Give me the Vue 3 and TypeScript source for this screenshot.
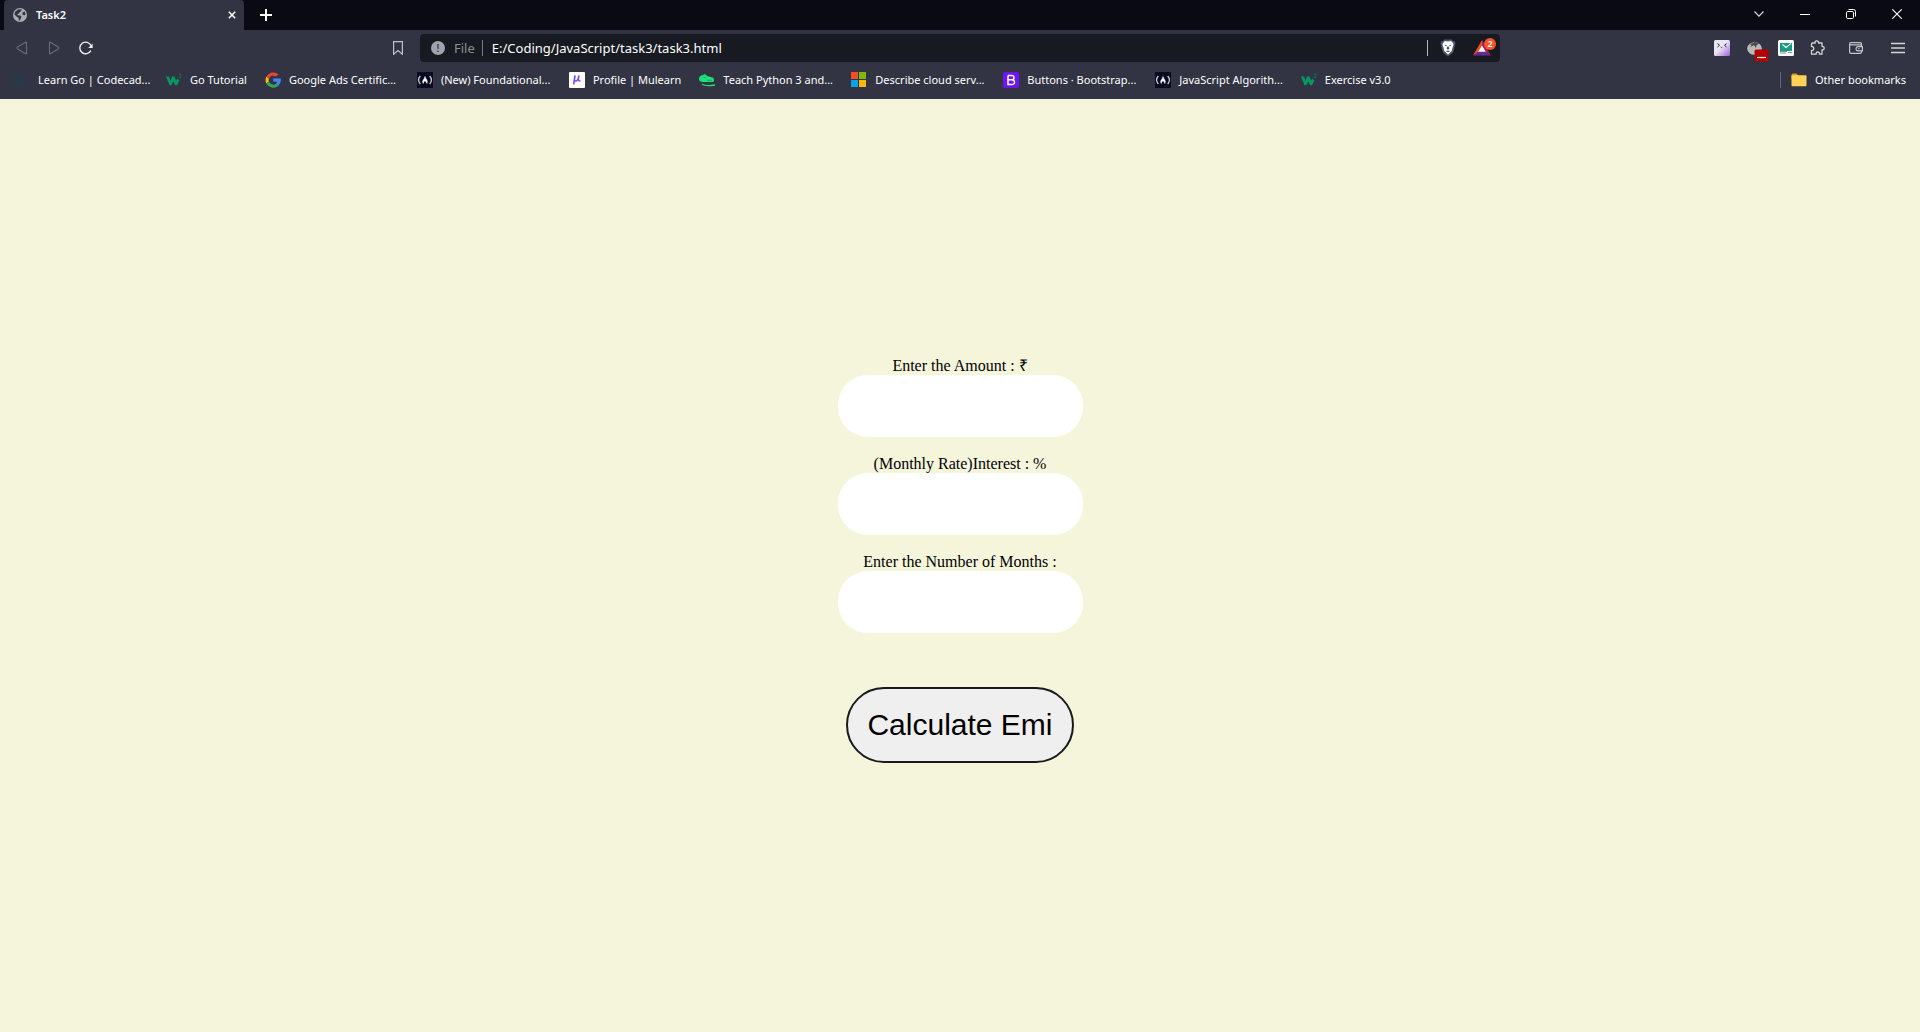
<script setup lang="ts">
import { ref } from 'vue'

type IconName = 'codecademy' | 'w3' | 'google' | 'fcc' | 'mulearn' | 'python' | 'microsoft' | 'bootstrap'

interface Bookmark {
  icon: IconName
  label: string
  clipped: boolean
}

const bookmarks: Bookmark[] = [
  { icon: 'codecademy', label: 'Learn Go | Codecad...', clipped: true },
  { icon: 'w3', label: 'Go Tutorial', clipped: false },
  { icon: 'google', label: 'Google Ads Certific...', clipped: true },
  { icon: 'fcc', label: '(New) Foundational...', clipped: true },
  { icon: 'mulearn', label: 'Profile | Mulearn', clipped: false },
  { icon: 'python', label: 'Teach Python 3 and...', clipped: true },
  { icon: 'microsoft', label: 'Describe cloud serv...', clipped: true },
  { icon: 'bootstrap', label: 'Buttons · Bootstrap...', clipped: true },
  { icon: 'fcc', label: 'JavaScript Algorith...', clipped: false },
  { icon: 'w3', label: 'Exercise v3.0', clipped: false },
]

const fields = [
  { id: 'amount', label: 'Enter the Amount : ₹' },
  { id: 'rate', label: '(Monthly Rate)Interest : %' },
  { id: 'months', label: 'Enter the Number of Months :' },
]

const values = ref<string[]>(['', '', ''])
const address = ref('E:/Coding/JavaScript/task3/task3.html')
</script>

<template>
  <div class="browser">
    <header class="chrome">
      <div class="tabstrip">
        <div class="tab">
          <svg class="icon" width="14" height="14" viewBox="0 0 14 14">
            <circle cx="7" cy="7" r="7" fill="#a9acb3" />
            <path d="M5 1.6 8.6 1.2 8.2 3.2 6.6 4 6.2 5.6 4.4 6 4.8 7.2 7.4 7.4 8.6 8.8 7.8 10.6 6.8 12.6 5.8 12.4 5.6 10 3.8 8.8 1.4 6.4 2.2 3.8Z M9.6 4.4 11.6 3.6 12.6 6.2 11.4 7.4 9.4 6.4Z" fill="#323443" />
          </svg>
          <span class="tab-title">Task2</span>
          <button class="plain tab-close" aria-label="Close tab">
            <svg width="8" height="8" viewBox="0 0 8 8"><path d="M.8.8 7.2 7.2M7.2.8.8 7.2" stroke="#fff" stroke-width="1.6" /></svg>
          </button>
        </div>
        <button class="plain new-tab" aria-label="New tab">
          <svg width="12" height="12" viewBox="0 0 12 12"><path d="M6 0V12M0 6H12" stroke="#fff" stroke-width="2" /></svg>
        </button>
        <div class="window-controls">
          <button class="plain" aria-label="Search tabs">
            <svg width="10" height="6" viewBox="0 0 10 6"><path d="M.5.5 5 5.2 9.500.5" fill="none" stroke="#dcdce0" stroke-width="1.1" /></svg>
          </button>
          <button class="plain" aria-label="Minimize">
            <svg width="10" height="10" viewBox="0 0 10 10"><path d="M0 5.500H10" stroke="#fff" /></svg>
          </button>
          <button class="plain" aria-label="Restore">
            <svg width="10" height="10" viewBox="0 0 10 10" fill="none" stroke="#fff"><rect x=".5" y="2.500" width="7" height="7" rx="1.200" /><path d="M2.500.5H7.500Q9.500.5 9.500 2.500V7.500" /></svg>
          </button>
          <button class="plain" aria-label="Close">
            <svg width="10" height="10" viewBox="0 0 10 10"><path d="M.3.3 9.700 9.700M9.700.3.3 9.700" stroke="#fff" stroke-width="1.100" /></svg>
          </button>
        </div>
      </div>

      <div class="toolbar">
        <div class="toolbar-left">
          <button class="plain nav" aria-label="Back">
            <svg width="12" height="14" viewBox="0 0 12 14"><path d="M10.500 1.600V12.400Q10.500 13.300 9.700 12.800L1.300 7.700Q.5 7 1.300 6.300L9.700 1.200Q10.500.7 10.500 1.600Z" fill="none" stroke="#686a77" stroke-width="1.100" /></svg>
          </button>
          <button class="plain nav" aria-label="Forward">
            <svg width="12" height="14" viewBox="0 0 12 14"><path d="M1.500 1.600V12.400Q1.500 13.300 2.300 12.800L10.700 7.700Q11.500 7 10.700 6.300L2.300 1.200Q1.500.7 1.500 1.600Z" fill="none" stroke="#686a77" stroke-width="1.100" /></svg>
          </button>
          <button class="plain nav" aria-label="Reload">
            <svg width="14" height="14" viewBox="0 0 14 14"><path d="M11.800 9.600A5.800 5.800 0 1 1 12 4.800" fill="none" stroke="#eeeef0" stroke-width="1.400" /><path d="M13.700 2.600V6.900H9.200Z" fill="#eeeef0" /></svg>
          </button>
          <button class="plain nav save" aria-label="Bookmark this page">
            <svg width="10" height="14" viewBox="0 0 10 14"><path d="M.6.6H9.400V13.200L5 9.600.6 13.200Z" fill="none" stroke="#c0c1c6" stroke-width="1.200" /></svg>
          </button>
        </div>

        <div class="address">
          <svg class="icon" width="14" height="14" viewBox="0 0 14 14"><circle cx="7" cy="7" r="7" fill="#a0a3ab" /><path d="M7 3V8M7 9.400V11" stroke="#53565e" stroke-width="1.800" /></svg>
          <span class="scheme">File</span>
          <input v-model="address" class="url" type="text" aria-label="Address" />
          <span class="rule"></span>
          <button class="plain shield" aria-label="Shields">
            <svg width="16" height="18" viewBox="0 0 16 18">
              <path d="M4.500.5H11.500L13.200 2.200 14.700 2 15.500 4.500 15 6 13.400 12.500 12.200 14.300 8 17.500 3.800 14.300 2.600 12.500 1 6 .5 4.500 1.300 2 2.800 2.200Z" fill="#55586a" />
              <path d="M5 2 8 2.600 11 2 12.600 3.500 13.600 5.200 12.300 9.500 11.700 12 8 15.500 4.300 12 3.700 9.500 2.400 5.200 3.400 3.500Z" fill="#fff" />
              <path d="M4.300 5.800 7 6.500 6 7.500ZM11.700 5.800 9 6.500 10 7.500ZM7.300 7.500H8.700L9.300 9.700 8 10.800 6.700 9.700ZM5.800 12 8 11.500 10.200 12 8 13.200Z" fill="#50535e" />
            </svg>
          </button>
          <button class="plain rewards" aria-label="Brave Rewards, 2 new">
            <svg width="20" height="16" viewBox="0 0 20 16"><path d="M10 0 15 8.500 10 6.500 6.600 12 1 15.500Z" fill="#ff4724" /><path d="M1 15.500 6.500 11.500H13.500L19 15.500Z" fill="#662d91" /><path d="M10 0 19 15.500 13.500 11.700 10 6Z" fill="#9e1f63" /><path d="M10 5.500 13.800 11.800H6.200Z" fill="#fff" /></svg>
            <span class="badge">2</span>
          </button>
        </div>

        <div class="toolbar-right">
          <button class="plain ext" aria-label="Face extension">
            <svg width="16" height="16" viewBox="0 0 16 16"><defs><linearGradient id="face" x1="0" y1="0" x2="1" y2="1"><stop offset=".45" stop-color="#e9e7f3" /><stop offset="1" stop-color="#a05bdc" /></linearGradient></defs><rect width="16" height="16" rx="1.500" fill="url(#face)" /><path d="M3.500 3.500 5.500 5.300 3.500 7M12.500 3.500 10.500 5.300 12.500 7M6.700 7 7.500 7.600 8.200 7" fill="none" stroke="#28243c" stroke-width="1" /></svg>
          </button>
          <button class="plain ext" aria-label="Tomato timer">
            <svg class="tomato" width="22" height="22" viewBox="0 0 22 22"><ellipse cx="7.500" cy="8.500" rx="7.300" ry="6.300" fill="#b9b9b7" /><path d="M2 4 7 3 6.500.5 8 .5 8.500 3 13 3.500 9.500 5 9 8 7 5 3.500 7 4.500 4.800Z" fill="#454840" /><rect x="7.500" y="9.500" width="14" height="12" rx="1.500" fill="#b70000" /><path d="M10 17.500H19" stroke="#fff" stroke-width="1.200" /></svg>
          </button>
          <button class="plain ext" aria-label="Mail extension">
            <svg width="16" height="16" viewBox="0 0 16 16"><rect width="16" height="16" rx="1.500" fill="#fff" /><rect x="2" y="3" width="12" height="8" fill="#149c84" /><path d="M4.500 4.500 8 7.500 13 3.500" fill="none" stroke="#fff" stroke-width="1.100" /><path d="M2 11.500H9M2 13H8M10 12.500H14" stroke="#59766f" stroke-width=".8" /></svg>
          </button>
          <button class="plain ext" aria-label="Extensions">
            <svg width="16" height="16" viewBox="0 0 16 16"><path d="M2.500 3H5.200C4.700 1.800 5.500.8 6.700.8S9 1.800 8.500 3H12V6.500C13.300 6.200 14.200 7 14.200 8.200S13.300 10.200 12 9.900V14.200H9.500C9.800 12.900 9 12 7.800 12S5.900 12.900 6.200 14.200H1.500V10.600C3 10.700 3.800 9.700 3.800 8.500S3 6.300 1.500 6.500V4Q1.500 3 2.500 3Z" fill="none" stroke="#d5d5d9" stroke-width="1.300" stroke-linejoin="round" /></svg>
          </button>
          <button class="plain wallet" aria-label="Wallet">
            <svg width="14" height="12" viewBox="0 0 14 12" fill="none" stroke="#c4c5ca" stroke-width="1.200"><path d="M12.500 4V2Q12.500.6 11 .6H2Q.6.6.6 2V10Q.6 11.400 2 11.400H11Q12.500 11.400 12.500 10V9M.6 2.800H12.500" /><path d="M13.400 4.600H9Q7 4.800 7 6.700T9 8.900H13.400Z" /><path d="M9.200 6.700H10.500" /></svg>
          </button>
          <button class="plain menu" aria-label="Menu">
            <svg width="14" height="12" viewBox="0 0 14 12"><path d="M0 1.500H14M0 6H14M0 10.500H14" stroke="#d6d6da" stroke-width="1.300" /></svg>
          </button>
        </div>
      </div>

      <nav class="bookmarks" aria-label="Bookmarks">
        <a v-for="mark in bookmarks" :key="mark.label" href="#" class="bookmark" :class="{ clipped: mark.clipped }">
          <svg class="icon" width="16" height="16" viewBox="0 0 16 16">
            <template v-if="mark.icon === 'codecademy'">
              <path d="M.7 1.700H9.500V14H.7ZM7 5.500Q3.500 4.500 3.500 7.800T7 10.300M11.500 14.300H15.500" fill="none" stroke="#233b53" stroke-width="1.300" />
            </template>
            <template v-else-if="mark.icon === 'w3'">
              <path d="M0 4.500H3L4.500 8.700 6 4.500H8.500L10 8.500 11.500 6.500 13.300 8.500 11 13.200H9.200L7.300 9.500 5.300 13.200H3.500Z" fill="#059862" />
              <path d="M12.500 2H15L13.800 3.500Q15.300 3.700 15 5T12.600 5.500" fill="none" stroke="#05774f" />
            </template>
            <template v-else-if="mark.icon === 'google'">
              <path d="M1.300 4.700A7.900 7.900 0 0 1 13.400 2.300L11.100 4.600A4.700 4.700 0 0 0 3.900 6.700Z" fill="#ea4335" />
              <path d="M1.300 4.700A8 8 0 0 0 1.300 11.500L3.900 9.500A4.700 4.700 0 0 1 3.900 6.700Z" fill="#fbbc05" />
              <path d="M1.300 11.500A7.900 7.900 0 0 0 13.300 14L10.700 12A4.700 4.700 0 0 1 3.900 9.500Z" fill="#34a853" />
              <path d="M8.200 6.600H15.700A8 8 0 0 1 13.300 14L10.700 12A3.500 3.500 0 0 0 12.200 9.700H8.200Z" fill="#4285f4" />
            </template>
            <template v-else-if="mark.icon === 'fcc'">
              <rect width="16" height="16" fill="#0a0a23" />
              <path d="M3.300 4Q-.2 8 3.300 12M12.700 4Q16.200 8 12.700 12" fill="none" stroke="#d0d0d8" stroke-width="1.200" />
              <path d="M8 4.500Q7.500 6.500 6.200 8T6.200 11.500Q6.500 9.500 8 8.800 9.500 9.500 9.800 11.500 11 9.700 9.800 8T8 4.500Z" fill="#fff" stroke="#fff" stroke-width=".5" />
            </template>
            <template v-else-if="mark.icon === 'mulearn'">
              <defs><linearGradient id="mu" x1="0" y1="0" x2="1" y2="1"><stop offset="0" stop-color="#3f55f5" /><stop offset="1" stop-color="#c04be8" /></linearGradient></defs>
              <rect width="16" height="16" rx="1" fill="#fff" />
              <path d="M6 3.500 4.700 12.500M5.600 8.500Q8.800 10.500 10 3.500M9.500 6.500Q9 9.500 11.500 8.700" fill="none" stroke="url(#mu)" stroke-width="1.700" />
            </template>
            <template v-else-if="mark.icon === 'python'">
              <path d="M0 7Q.2 3 4 3.200 5 1.500 7 2.700L8 4 13.500 5.500Q15.300 6.200 15 9L14 10H4Q0 10 0 7Z" fill="#1edf78" />
              <path d="M3 12.300Q7 14.600 16 13" fill="none" stroke="#1edf78" stroke-width="1.300" />
              <path d="M4.500 5.500H7M8 8.300H13" stroke="#159755" stroke-width=".8" />
            </template>
            <template v-else-if="mark.icon === 'microsoft'">
              <path d="M0 0H7V7H0Z" fill="#f25022" /><path d="M8 0H15V7H8Z" fill="#7fba00" /><path d="M0 8H7V15H0Z" fill="#00a4ef" /><path d="M8 8H15V15H8Z" fill="#ffb900" />
            </template>
            <template v-else>
              <rect width="16" height="16" rx="2" fill="#6f14f5" />
              <path d="M5 3.500H8.500Q11 3.500 11 5.700T8.500 7.800H5M8.500 7.800Q11.500 7.800 11.500 10.200T8.500 12.500H5V3.500" fill="none" stroke="#fff" stroke-width="1.500" />
            </template>
          </svg>
          <span>{{ mark.label }}</span>
        </a>
        <a href="#" class="bookmark other">
          <svg class="icon" width="16" height="14" viewBox="0 0 16 14"><path d="M.5 2Q.5.5 2 .5H5.500L7.500 3V6H.5Z" fill="#d79a14" /><rect x=".5" y="2.300" width="15" height="11" rx="1" fill="#ffd257" /></svg>
          <span>Other bookmarks</span>
        </a>
      </nav>
    </header>

    <main class="page">
      <form class="emi" @submit.prevent>
        <div v-for="(field, i) in fields" :key="field.id" class="field">
          <label :for="field.id">{{ field.label }}</label>
          <input :id="field.id" v-model="values[i]" type="text" />
        </div>
        <button class="calculate" type="submit">Calculate Emi</button>
      </form>
    </main>
  </div>
</template>

<style>
body {
  margin: 0;
}
</style>

<style scoped>
.browser {
  display: flex;
  flex-direction: column;
  min-height: 100vh;
  background: #f5f5dc;
}

.chrome {
  background: #323443;
  color: #fff;
  font: 12px/16px "Noto Sans", "Open Sans", sans-serif;
}

.chrome svg {
  display: block;
  flex: none;
}

.plain {
  display: flex;
  align-items: center;
  justify-content: center;
  padding: 0;
  border: 0;
  background: none;
  color: inherit;
  font: inherit;
}

.tabstrip {
  display: flex;
  height: 30px;
  padding-left: 4px;
  background: #0a0a14;
}

.tab {
  display: flex;
  align-items: center;
  box-sizing: border-box;
  width: 240px;
  padding: 0 8px 0 9px;
  border-radius: 4px 4px 0 0;
  background: #323443;
}

.tab-title {
  flex: 1;
  margin-left: 9px;
  font-size: 11px;
  font-weight: 600;
}

.new-tab {
  width: 44px;
}

.window-controls {
  display: flex;
  margin-left: auto;
}

.window-controls button {
  width: 46px;
  height: 28px;
}

.toolbar {
  display: flex;
  align-items: center;
  height: 36px;
}

.toolbar-left,
.toolbar-right {
  display: flex;
  flex: 1;
  align-items: center;
}

.toolbar-left {
  padding-left: 6px;
}

.nav {
  width: 32px;
  height: 28px;
}

.save {
  margin-left: auto;
  margin-right: 6px;
}

.address {
  display: flex;
  align-items: center;
  flex: 0 1 1080px;
  min-width: 0;
  height: 28px;
  box-sizing: border-box;
  padding: 0 4px 0 11px;
  border-radius: 4px;
  background: #181a21;
}

.scheme {
  margin: 0 7px 0 9px;
  padding-right: 7px;
  border-right: 1px solid #777a80;
  color: #8d9096;
  font-size: 13px;
}

.url {
  flex: 1;
  min-width: 0;
  padding: 0;
  margin-left: 2px;
  border: 0;
  outline: 0;
  background: none;
  color: #fff;
  font: 13px/20px "Noto Sans", "Open Sans", sans-serif;
}

.rule {
  width: 1px;
  height: 16px;
  background: #b5b6ba;
}

.shield {
  width: 40px;
}

.rewards {
  position: relative;
  width: 28px;
  height: 24px;
}

.badge {
  position: absolute;
  top: 2px;
  right: 0;
  width: 12px;
  height: 12px;
  border-radius: 6px;
  background: #fb542b;
  font-size: 9px;
  font-weight: 600;
  line-height: 12px;
}

.toolbar-right {
  justify-content: flex-end;
  padding-right: 6px;
}

.ext {
  width: 32px;
  height: 28px;
}

.tomato {
  margin: 6px 0 0 8px;
}

.wallet {
  width: 44px;
}

.menu {
  width: 32px;
  margin-left: 4px;
}

.bookmarks {
  display: flex;
  align-items: center;
  height: 33px;
  box-sizing: border-box;
  padding: 0 14px 5px;
  white-space: nowrap;
}

.bookmark {
  display: flex;
  align-items: center;
  gap: 8px;
  padding-right: 18px;
  color: #fff;
  font-size: 11px;
  text-decoration: none;
}

.clipped {
  box-sizing: border-box;
  width: 152px;
  padding-right: 0;
}

.other {
  margin-left: auto;
  padding: 0 0 0 10px;
  border-left: 1px solid #646672;
}

.page {
  display: flex;
  flex: 1;
  align-items: center;
  justify-content: center;
  padding-bottom: 12px;
  color: #000;
  font: 16px/18px "Liberation Serif", "Times New Roman", serif;
}

.emi {
  display: flex;
  flex-direction: column;
  align-items: center;
  gap: 18px;
}

.field {
  display: flex;
  flex-direction: column;
  align-items: center;
}

.field input {
  width: 245px;
  height: 62px;
  box-sizing: border-box;
  padding: 0 20px;
  border: 0;
  border-radius: 30px;
  background: #fff;
  font: 20px "Liberation Sans", Arial, sans-serif;
}

.calculate {
  height: 76px;
  margin-top: 36px;
  padding: 0 19px;
  border: 2px solid #1a1a1a;
  border-radius: 40px;
  background: #efefef;
  color: #000;
  font: 30px "Liberation Sans", Arial, sans-serif;
}
</style>
